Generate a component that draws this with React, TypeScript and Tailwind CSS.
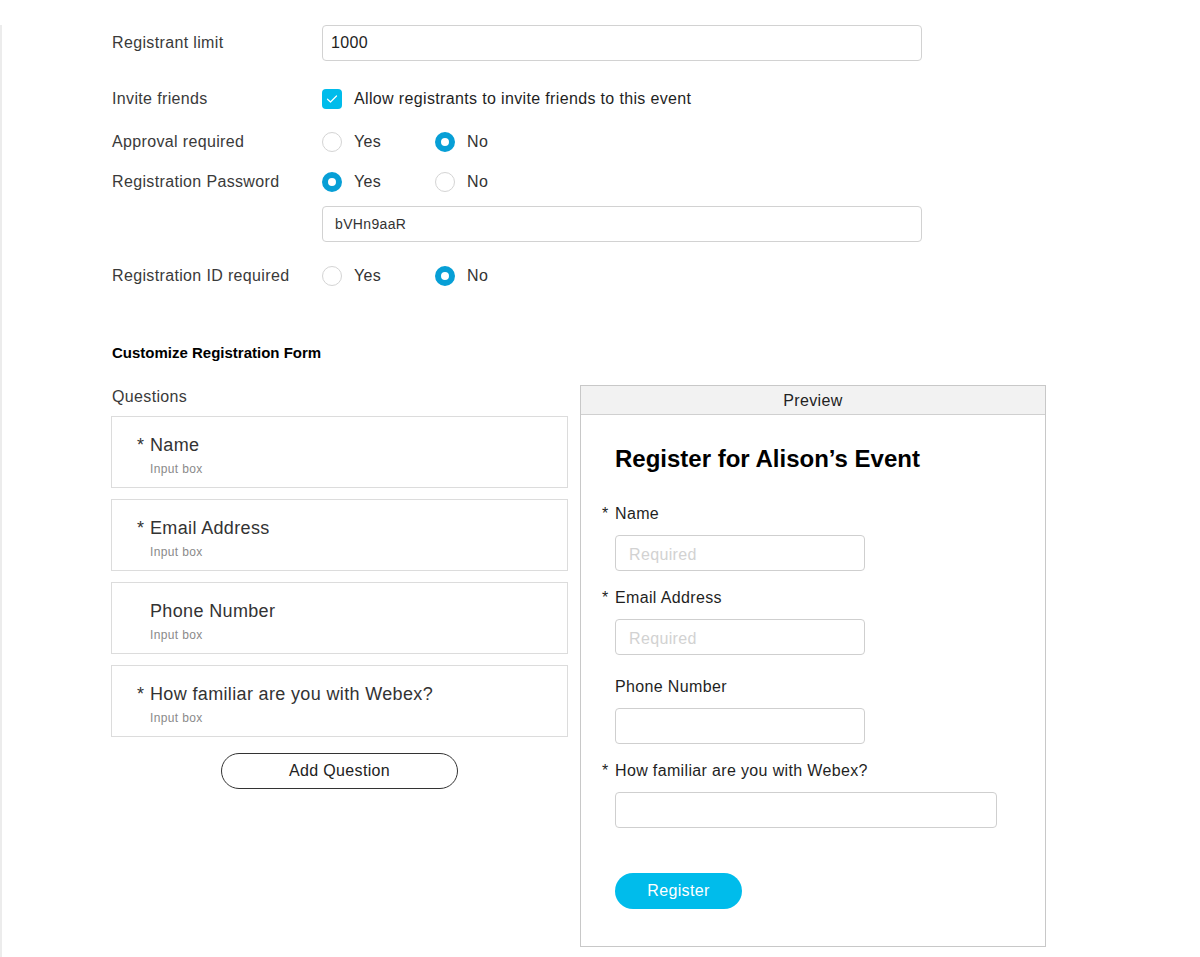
import React from "react";

const font = { fontFamily: '"Liberation Sans", Arial, sans-serif' };

function Radio({ checked }: { checked?: boolean }) {
  return checked ? (
    <span className="h-5 w-5 shrink-0 rounded-full border-[6px] border-[#079fd6] bg-white" />
  ) : (
    <span className="h-5 w-5 shrink-0 rounded-full border border-[#d4d4d4] bg-white" />
  );
}

function YesNo({ value }: { value: "yes" | "no" }) {
  return (
    <div className="flex items-center">
      <div className="flex w-[113px] items-center gap-3">
        <Radio checked={value === "yes"} />
        <span>Yes</span>
      </div>
      <div className="flex items-center gap-3">
        <Radio checked={value === "no"} />
        <span>No</span>
      </div>
    </div>
  );
}

function Row({
  label,
  className,
  children,
}: {
  label: string;
  className: string;
  children: React.ReactNode;
}) {
  return (
    <div className={`flex items-center ${className}`}>
      <div className="w-[210px] shrink-0 text-[#3a3a3a]">{label}</div>
      {children}
    </div>
  );
}

const questions = [
  { name: "Name", required: true },
  { name: "Email Address", required: true },
  { name: "Phone Number", required: false },
  { name: "How familiar are you with Webex?", required: true },
];

function PreviewField({
  label,
  required,
  wide,
  placeholder,
  className,
}: {
  label: string;
  required: boolean;
  wide?: boolean;
  placeholder?: string;
  className: string;
}) {
  return (
    <div className={className}>
      <div className="flex h-6 items-center text-[#1f1f1f]">
        <span className="w-[13px]">{required ? "*" : ""}</span>
        <span>{label}</span>
      </div>
      <div
        className={`ml-[13px] mt-[9px] flex h-9 items-center rounded border border-[#cfcfcf] bg-white px-[13px] pt-1 text-[#d2d2d2] ${
          wide ? "w-[382px]" : "w-[250px]"
        }`}
      >
        {placeholder}
      </div>
    </div>
  );
}

export default function App() {
  return (
    <div
      className="min-h-[957px] w-[1200px] border-l-2 border-[#ececec] bg-white text-base tracking-[0.022em] text-[#333]"
      style={font}
    >
      <div className="pl-[110px]">
        <Row label="Registrant limit" className="mt-[25px] h-9">
          <div className="flex h-9 w-[600px] items-center rounded border border-[#d2d2d2] px-2 text-[#222]">
            1000
          </div>
        </Row>

        <Row label="Invite friends" className="mt-[28px] h-5">
          <div className="flex items-center gap-3">
            <span className="flex h-5 w-5 items-center justify-center rounded bg-[#00bceb]">
              <svg width="12" height="10" viewBox="0 0 12 10" fill="none">
                <path d="M1.5 5.2 L4.5 8 L10.5 2" stroke="white" strokeWidth="1.2" strokeLinecap="round" strokeLinejoin="round" />
              </svg>
            </span>
            <span className="text-[#1f1f1f]">Allow registrants to invite friends to this event</span>
          </div>
        </Row>

        <Row label="Approval required" className="mt-[23px] h-5">
          <YesNo value="no" />
        </Row>

        <Row label="Registration Password" className="mt-5 h-5">
          <YesNo value="yes" />
        </Row>

        <div className="ml-[210px] mt-[14px] flex h-9 w-[600px] items-center rounded border border-[#d2d2d2] px-3 text-sm text-[#333]">
          bVHn9aaR
        </div>

        <Row label="Registration ID required" className="mt-6 h-5">
          <YesNo value="no" />
        </Row>

        <div className="mt-[57px] flex h-5 items-center text-[15px] font-bold tracking-normal text-black">
          Customize Registration Form
        </div>

        <div className="-ml-px mt-[22px] flex items-start gap-3">
          <div className="w-[457px]">
            <div className="flex h-6 items-center pl-px text-[#3a3a3a]">Questions</div>
            <div className="mt-[7px] flex flex-col gap-[11px]">
              {questions.map((q) => (
                <div
                  key={q.name}
                  className="h-[72px] border border-[#dcdcdc] bg-white pl-[25px] pt-4"
                >
                  <div className="flex h-6 items-center text-lg text-[#333]">
                    <span className="w-[13px]">{q.required ? "*" : ""}</span>
                    <span>{q.name}</span>
                  </div>
                  <div className="ml-[13px] mt-1 flex h-4 items-center text-xs text-[#8a8a8a]">
                    Input box
                  </div>
                </div>
              ))}
            </div>
            <div className="mt-4 flex justify-center">
              <button className="flex h-9 w-[237px] items-center justify-center rounded-full border border-[#333] bg-white text-[#222]">
                Add Question
              </button>
            </div>
          </div>

          <div className="w-[466px] border border-[#c8c8c8] bg-white">
            <div className="flex h-[29px] items-center justify-center border-b border-[#d0d0d0] bg-[#f2f2f2] pt-px text-[#222]">
              Preview
            </div>
            <div className="pb-[37px] pl-[21px] pt-[28px]">
              <div className="ml-[13px] flex h-8 items-center text-2xl font-bold tracking-normal text-black">
                Register for Alison’s Event
              </div>
              <PreviewField className="mt-[27px]" label="Name" required placeholder="Required" />
              <PreviewField className="mt-[15px]" label="Email Address" required placeholder="Required" />
              <PreviewField className="mt-5" label="Phone Number" required={false} />
              <PreviewField className="mt-[15px]" label="How familiar are you with Webex?" required wide />
              <button className="ml-[13px] mt-[45px] flex h-9 w-[127px] items-center justify-center rounded-full bg-[#00bceb] text-white">
                Register
              </button>
            </div>
          </div>
        </div>
      </div>
    </div>
  );
}
